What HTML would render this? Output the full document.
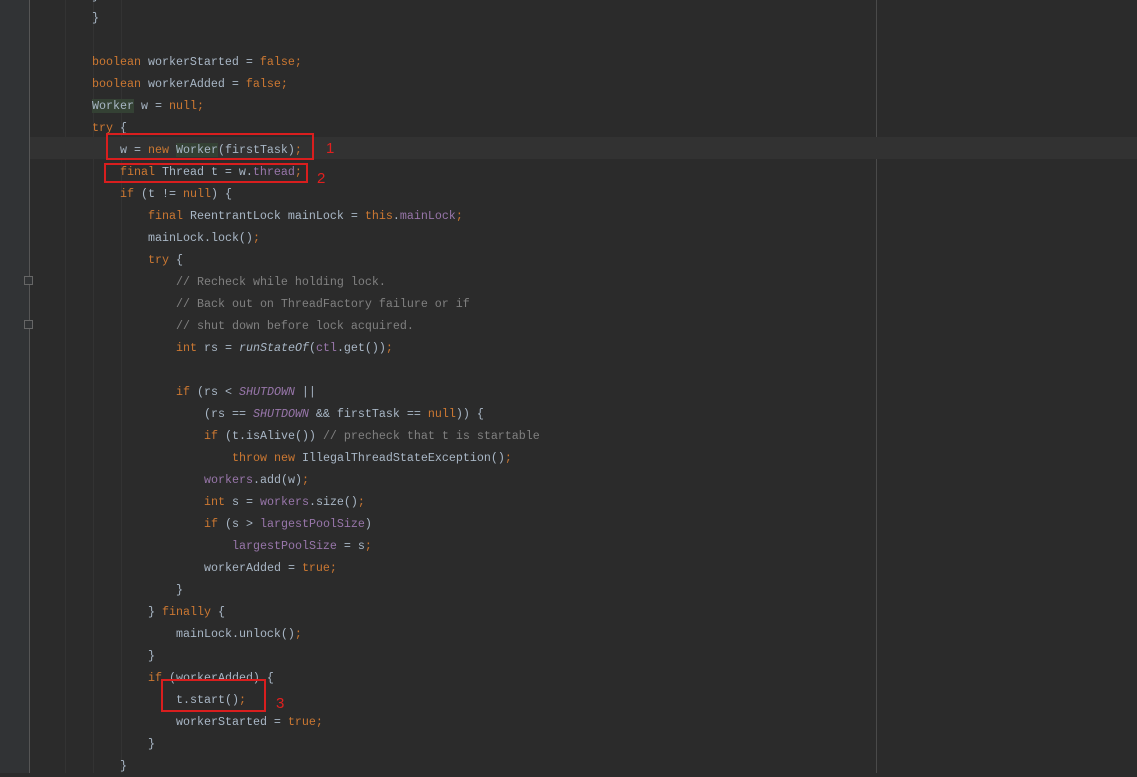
<!DOCTYPE html>
<html><head><meta charset="utf-8"><style>
body{margin:0;width:1137px;height:773px;background:#2b2b2b;overflow:hidden;position:relative;font-family:"Liberation Mono",monospace;font-size:11.67px;color:#a9b7c6}
.g{position:absolute;left:0;top:0;width:29px;height:773px;background:#313335}
.gl{position:absolute;left:29px;top:0;width:1px;height:773px;background:#555}
.ig{position:absolute;top:0;width:1px;height:773px;background:#333}
.rm{position:absolute;left:876px;top:0;width:1px;height:773px;background:#4a4a4a}
.hl{position:absolute;left:30px;top:137px;width:1107px;height:22px;background:#323232}
.l{position:absolute;height:22px;line-height:22px;white-space:pre;margin-top:2px}
.k{color:#cc7832}.f{color:#9876aa}.c{color:#808080}.i{font-style:italic}.fi{color:#9876aa;font-style:italic}
.wk{background:#344134}
.box{position:absolute;border:2px solid #d91e1e}
.n{position:absolute;color:#e0201f;font-family:"Liberation Sans",sans-serif;font-size:15px}
.fold{position:absolute;left:24px;width:9px;height:9px;border:1px solid #666;box-sizing:border-box;background:#313335}
</style></head><body>
<div class="g"></div><div class="gl"></div>
<div class="ig" style="left:65px"></div><div class="ig" style="left:93px"></div><div class="ig" style="left:121px"></div>
<div class="rm"></div>
<div class="hl"></div>
<div class="fold" style="top:276px"></div><div class="fold" style="top:320px"></div>
<div class="l" style="left:92px;top:-17px">}</div>
<div class="l" style="left:92px;top:5px">}</div>
<div class="l" style="left:92px;top:49px"><span class="k">boolean</span> workerStarted = <span class="k">false;</span></div>
<div class="l" style="left:92px;top:71px"><span class="k">boolean</span> workerAdded = <span class="k">false;</span></div>
<div class="l" style="left:92px;top:93px"><span class="wk">Worker</span> w = <span class="k">null;</span></div>
<div class="l" style="left:92px;top:115px"><span class="k">try</span> {</div>
<div class="l" style="left:120px;top:137px">w = <span class="k">new</span> <span class="wk">Worker</span>(firstTask)<span class="k">;</span></div>
<div class="l" style="left:120px;top:159px"><span class="k">final</span> Thread t = w.<span class="f">thread</span><span class="k">;</span></div>
<div class="l" style="left:120px;top:181px"><span class="k">if</span> (t != <span class="k">null</span>) {</div>
<div class="l" style="left:148px;top:203px"><span class="k">final</span> ReentrantLock mainLock = <span class="k">this</span>.<span class="f">mainLock</span><span class="k">;</span></div>
<div class="l" style="left:148px;top:225px">mainLock.lock()<span class="k">;</span></div>
<div class="l" style="left:148px;top:247px"><span class="k">try</span> {</div>
<div class="l c" style="left:176px;top:269px">// Recheck while holding lock.</div>
<div class="l c" style="left:176px;top:291px">// Back out on ThreadFactory failure or if</div>
<div class="l c" style="left:176px;top:313px">// shut down before lock acquired.</div>
<div class="l" style="left:176px;top:335px"><span class="k">int</span> rs = <span class="i">runStateOf</span>(<span class="f">ctl</span>.get())<span class="k">;</span></div>
<div class="l" style="left:176px;top:379px"><span class="k">if</span> (rs &lt; <span class="fi">SHUTDOWN</span> ||</div>
<div class="l" style="left:204px;top:401px">(rs == <span class="fi">SHUTDOWN</span> &amp;&amp; firstTask == <span class="k">null</span>)) {</div>
<div class="l" style="left:204px;top:423px"><span class="k">if</span> (t.isAlive()) <span class="c">// precheck that t is startable</span></div>
<div class="l" style="left:232px;top:445px"><span class="k">throw new</span> IllegalThreadStateException()<span class="k">;</span></div>
<div class="l" style="left:204px;top:467px"><span class="f">workers</span>.add(w)<span class="k">;</span></div>
<div class="l" style="left:204px;top:489px"><span class="k">int</span> s = <span class="f">workers</span>.size()<span class="k">;</span></div>
<div class="l" style="left:204px;top:511px"><span class="k">if</span> (s &gt; <span class="f">largestPoolSize</span>)</div>
<div class="l" style="left:232px;top:533px"><span class="f">largestPoolSize</span> = s<span class="k">;</span></div>
<div class="l" style="left:204px;top:555px">workerAdded = <span class="k">true;</span></div>
<div class="l" style="left:176px;top:577px">}</div>
<div class="l" style="left:148px;top:599px">} <span class="k">finally</span> {</div>
<div class="l" style="left:176px;top:621px">mainLock.unlock()<span class="k">;</span></div>
<div class="l" style="left:148px;top:643px">}</div>
<div class="l" style="left:148px;top:665px"><span class="k">if</span> (workerAdded) {</div>
<div class="l" style="left:176px;top:687px">t.start()<span class="k">;</span></div>
<div class="l" style="left:176px;top:709px">workerStarted = <span class="k">true;</span></div>
<div class="l" style="left:148px;top:731px">}</div>
<div class="l" style="left:120px;top:753px">}</div>
<div class="box" style="left:106px;top:133px;width:204px;height:23px"></div>
<div class="box" style="left:104px;top:163px;width:200px;height:16px"></div>
<div class="box" style="left:161px;top:679px;width:101px;height:29px"></div>
<div class="n" style="left:326px;top:140px">1</div>
<div class="n" style="left:317px;top:170px">2</div>
<div class="n" style="left:276px;top:695px">3</div>
</body></html>
